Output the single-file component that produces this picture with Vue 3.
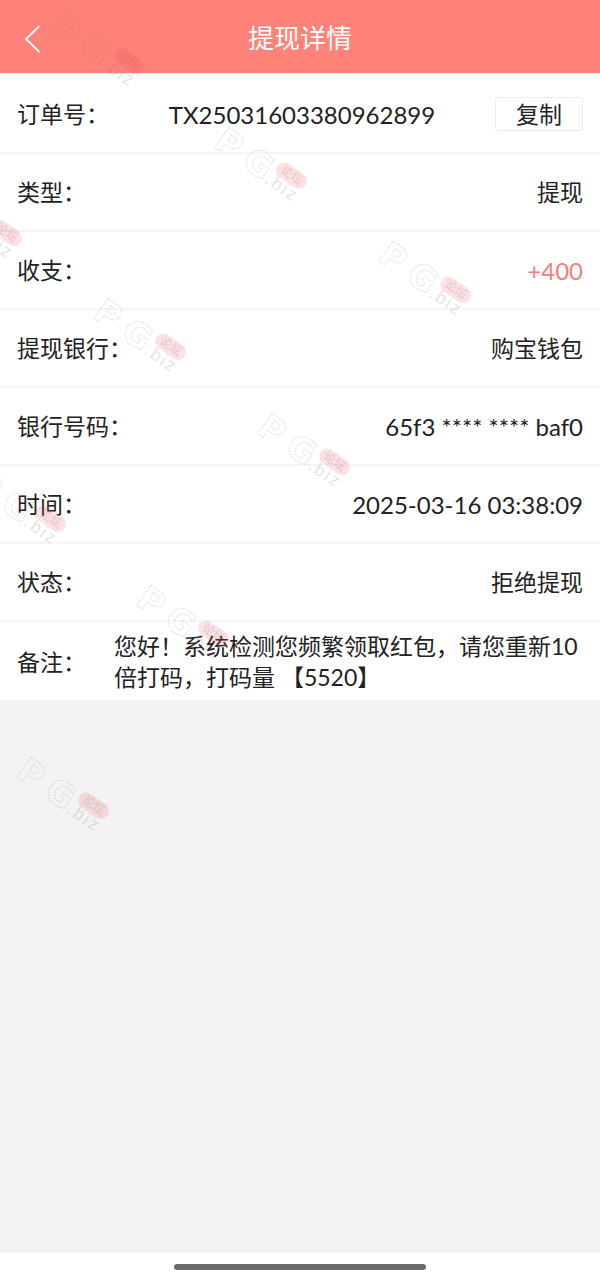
<script setup>
import { ref } from 'vue'

const orderNo = 'TX25031603380962899'
const copied = ref(false)

const rows = [
  { label: '类型', value: '提现' },
  { label: '收支', value: '+400', type: 'is-amount' },
  { label: '提现银行', value: '购宝钱包' },
  { label: '银行号码', value: '65f3 **** **** baf0', type: 'is-number' },
  { label: '时间', value: '2025-03-16 03:38:09', type: 'is-number' },
  { label: '状态', value: '拒绝提现' }
]

const remark = '您好！系统检测您频繁领取红包，请您重新10倍打码，打码量 【5520】'

// Baseline start of every watermark stamp
const stamps = [
  [51, 32], [214, 147], [378, 261],
  [-71, 204], [93, 318], [257, 433],
  [-27, 490], [136, 605], [16, 777]
]

async function copyOrder() {
  try {
    await navigator.clipboard.writeText(orderNo)
    copied.value = true
  } catch (e) {
    copied.value = false
  }
}

function goBack() {
  window.history.back()
}
</script>

<template>
  <div class="page">
    <header class="header">
      <button class="back" type="button" aria-label="返回" @click="goBack">
        <svg width="16" height="28" viewBox="0 0 16 28" fill="none">
          <path d="M15.5 1 L2 14 L15.5 27" stroke="currentColor" stroke-width="1.8" />
        </svg>
      </button>
      <h1 class="title">提现详情</h1>
    </header>

    <main class="content">
      <dl class="list">
        <div class="row">
          <dt>订单号：</dt>
          <dd class="is-number">{{ orderNo }}</dd>
          <dd class="action">
            <button class="copy" type="button" :aria-pressed="copied" @click="copyOrder">复制</button>
          </dd>
        </div>
        <div v-for="row in rows" :key="row.label" class="row">
          <dt>{{ row.label }}：</dt>
          <dd :class="row.type">{{ row.value }}</dd>
        </div>
        <div class="row row-remark">
          <dt>备注：</dt>
          <dd>{{ remark }}</dd>
        </div>
      </dl>
    </main>

    <footer class="home-bar">
      <span class="handle" />
    </footer>

    <svg class="watermark" aria-hidden="true">
      <g
        v-for="([x, y], i) in stamps"
        :key="i"
        :transform="`translate(${x} ${y}) rotate(35)`"
      >
        <text class="mark-big" x="-2 32" y="0">PG</text>
        <text class="mark-small" x="61 68 80 86" y="0">.biz</text>
        <rect class="mark-pill" x="63" y="-29" width="34" height="16" rx="8" />
        <text class="mark-forum" x="80" y="-17" text-anchor="middle">论坛</text>
      </g>
    </svg>
  </div>
</template>

<style>
body {
  margin: 0;
  background: #f3f3f3;
}
</style>

<style scoped>
.page {
  position: relative;
  display: flex;
  flex-direction: column;
  min-height: 100vh;
  overflow: hidden;
  background: #f3f3f3;
  color: #222;
  font-family: Lato, "Noto Sans CJK SC", sans-serif;
  font-size: 23px;
  line-height: 33px;
}

.header {
  display: grid;
  grid-template-columns: 64px 1fr 64px;
  align-items: center;
  height: 73px;
  border-bottom: 1px solid #fbe3e1;
  background: #ff8279;
  color: #fff;
}
.back {
  display: flex;
  padding: 12px 24px 8px;
  border: 0;
  background: none;
  color: inherit;
  cursor: pointer;
}
.title {
  margin: 0;
  padding-top: 4px;
  font-size: 26px;
  font-weight: 400;
  text-align: center;
}

.content {
  flex: 1;
}
.list {
  margin: 0;
  padding-top: 1px;
  background: #fff;
}
.row {
  display: flex;
  align-items: center;
  justify-content: space-between;
  padding: 22px 17px 21px;
  border-bottom: 2px solid #f5f5f5;
}
.row dt {
  flex: none;
}
.row dd {
  margin: 0;
}
.row .is-number,
.row .is-amount {
  font-size: 24px;
}
.row .is-amount {
  color: #f0827c;
}
.row .action {
  display: flex;
}
.copy {
  width: 88px;
  height: 34px;
  padding: 0;
  border: 1px solid #ececec;
  border-radius: 3px;
  background: #fff;
  color: inherit;
  font: inherit;
  line-height: 32px;
  cursor: pointer;
}
.row-remark {
  gap: 28px;
  padding: 9px 17px 7px;
  border-bottom: 0;
}
.row-remark dd {
  flex: 1;
  line-height: 31px;
}

.home-bar {
  display: flex;
  justify-content: center;
  padding: 11px 0 10px;
  background: #fff;
}
.handle {
  width: 42%;
  height: 6px;
  border-radius: 3px;
  background: #6b6b6b;
}

.watermark {
  position: absolute;
  inset: 0;
  width: 100%;
  height: 100%;
  pointer-events: none;
}
.mark-big {
  fill: none;
  stroke: rgba(110, 110, 125, 0.24);
  stroke-width: 1;
  stroke-dasharray: 2 1;
  font: 700 34px "DejaVu Sans", sans-serif;
}
.mark-small {
  fill: rgba(110, 110, 125, 0.2);
  font: 400 18px "Liberation Sans", sans-serif;
}
.mark-pill {
  fill: rgba(240, 70, 80, 0.16);
}
.mark-forum {
  fill: rgba(110, 120, 120, 0.18);
  font: 700 12px "Noto Sans CJK SC", sans-serif;
}
</style>
